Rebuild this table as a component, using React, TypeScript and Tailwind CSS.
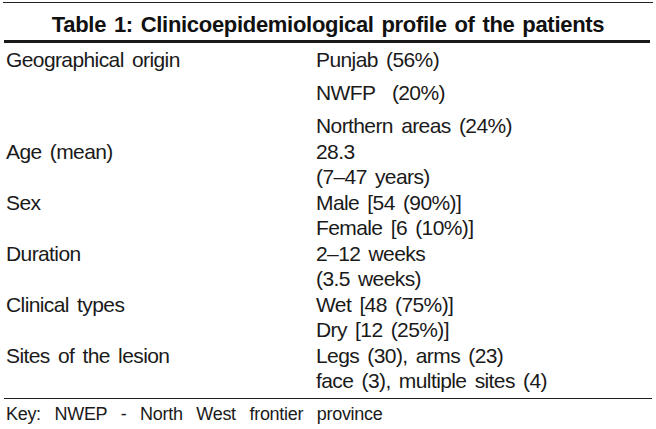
type Row = { label: string; values: string[]; wide?: boolean };

const rows: Row[] = [
  { label: 'Geographical origin', values: ['Punjab (56%)', 'NWFP\u00a0\u00a0(20%)', 'Northern areas (24%)'], wide: true },
  { label: 'Age (mean)', values: ['28.3', '(7–47 years)'] },
  { label: 'Sex', values: ['Male [54 (90%)]', 'Female [6 (10%)]'] },
  { label: 'Duration', values: ['2–12 weeks', '(3.5 weeks)'] },
  { label: 'Clinical types', values: ['Wet [48 (75%)]', 'Dry [12 (25%)]'] },
  { label: 'Sites of the lesion', values: ['Legs (30), arms (23)', 'face (3), multiple sites (4)'] },
];

export default function App() {
  return (
    <div className="h-[429px] w-[656px] overflow-hidden bg-white text-[#1a1a1a] font-['Liberation_Sans',Arial,sans-serif]">
      <div className="mx-[3px] mt-[2px] border-t border-[#222]" />

      <div className="pt-[11px] pb-[4px] text-center text-[22px] font-bold leading-[22px] tracking-[-0.3px] [word-spacing:2px] text-[#111]">
        Table 1: Clinicoepidemiological profile of the patients
      </div>
      <div className="ml-[4px] mr-[6px] h-[3px] bg-[#1a1a1a]" />

      <div className="pt-[4px] text-[21px] leading-[25.5px] tracking-[-0.6px] [word-spacing:3px]">
        {rows.map((row) => (
          <div key={row.label} className="grid grid-cols-[310px_1fr] pl-[6px]">
            <div>{row.label}</div>
            <div className="flex flex-col">
              {row.values.map((v, i) => (
                <div
                  key={v}
                  className={row.wide && i < row.values.length - 1 ? 'mb-[7.5px] whitespace-pre' : 'whitespace-pre'}
                >
                  {v}
                </div>
              ))}
            </div>
          </div>
        ))}
      </div>

      <div className="mx-[4px] mt-[4.5px] border-t border-[#222]" />
      <div className="pl-[6px] pt-[6px] text-[18px] leading-[18px] tracking-[-0.3px] [word-spacing:9px]">
        Key: NWEP - North West frontier province
      </div>
    </div>
  );
}
